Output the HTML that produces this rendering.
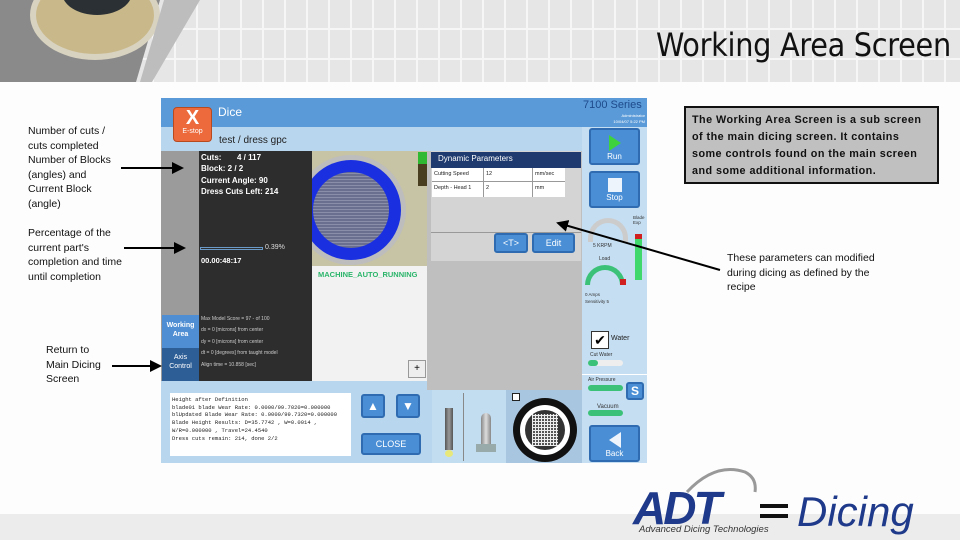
<!DOCTYPE html>
<html><head><meta charset="utf-8"><style>
*{margin:0;padding:0;box-sizing:border-box}
body{width:960px;height:540px;position:relative;overflow:hidden;background:#fdfdfd;font-family:"Liberation Sans",sans-serif}
.a{position:absolute}
.t{font-size:10.5px;line-height:14.5px;color:#111}
.btn{position:absolute;background:#4a8fd6;border:2px solid #2e6bb0;border-radius:3px;color:#fff;font-size:8px;text-align:center}
.mono{font-family:"Liberation Mono",monospace;font-size:5.5px;line-height:7.7px;color:#222}
</style></head><body>
<!-- header -->
<div class="a" style="left:0;top:0;width:960px;height:82px;background:repeating-linear-gradient(90deg,#e6e6e6 0 20px,#f6f6f6 20px 22px),#e8e8e8"></div>
<div class="a" style="left:0;top:0;width:960px;height:82px;background:repeating-linear-gradient(180deg,transparent 0 28px,#f6f6f6 28px 30px)"></div>
<div class="a" style="left:0;top:0;width:160px;height:82px;background:#8a8a8a;clip-path:polygon(0 0,100% 0,85% 100%,0 100%)"></div>
<div class="a" style="left:30px;top:-30px;width:130px;height:90px;border-radius:50%;background:#c9b98a;border:6px solid #d8d2c0"></div>
<div class="a" style="left:62px;top:-30px;width:70px;height:45px;border-radius:50%;background:#2a3034"></div>
<div class="a" style="left:140px;top:0;width:60px;height:82px;background:#bdbdbd;clip-path:polygon(40% 0,100% 0,20% 100%,0 100%)"></div>
<div class="a" style="left:656px;top:26px;font-size:32px;color:#111;font-family:'DejaVu Sans Condensed','Liberation Sans Narrow',sans-serif;letter-spacing:-0.3px">Working Area Screen</div>
<!-- bottom band -->
<div class="a" style="left:0;top:514px;width:960px;height:26px;background:#ececec"></div>
<!-- screen -->
<div class="a" style="left:161px;top:98px;width:486px;height:365px;background:#b8d6ee"></div>
<div class="a" style="left:161px;top:98px;width:486px;height:29px;background:#5a9ad8"></div>
<div class="a" style="left:218px;top:105px;font-size:12px;color:#fff">Dice</div>
<div class="a" style="left:583px;top:99px;font-size:11px;color:#1e4a8a">7100 Series</div>
<div class="a" style="left:600px;top:113px;font-size:4px;color:#fff;text-align:right;width:45px;line-height:6px">Administrator<br>10/04/07 5:22 PM</div>
<div class="a" style="left:173px;top:107px;width:39px;height:35px;background:#ec6a3c;border-radius:4px;border:1px solid #b84a20;color:#fff;text-align:center"><div style="font-size:20px;font-weight:bold;line-height:20px">X</div><div style="font-size:7px">E-stop</div></div>
<div class="a" style="left:219px;top:135px;font-size:10px;color:#222">test / dress gpc</div>
<div class="a" style="left:161px;top:151px;width:38px;height:230px;background:#9b9b9b"></div>
<div class="a" style="left:199px;top:151px;width:113px;height:230px;background:#2d2d2d"></div>
<div class="a" style="left:201px;top:152px;font-size:8px;line-height:11.3px;color:#fff;font-weight:bold">Cuts: &nbsp;&nbsp;&nbsp;&nbsp;&nbsp;&nbsp;4 / 117<br>Block: 2 / 2<br>Current Angle: 90<br>Dress Cuts Left: 214</div>
<div class="a" style="left:200px;top:247px;width:63px;height:3px;border:1px solid #6a9ac8"></div>
<div class="a" style="left:265px;top:244px;font-size:7px;color:#ddd">0.39%</div>
<div class="a" style="left:201px;top:256px;font-size:7.5px;color:#fff;font-weight:bold">00.00:48:17</div>
<div class="a" style="left:201px;top:314px;font-size:5px;line-height:11.4px;color:#ccc">Max Model Score = 97 - of 100<br>dx = 0 [microns] from center<br>dy = 0 [microns] from center<br>dt = 0 [degrees] from taught model<br>Align time = 10.858 [sec]</div>
<div class="a" style="left:162px;top:315px;width:37px;height:33px;background:#4f8ed2;color:#fff;font-size:7px;text-align:center;padding-top:7px;font-weight:bold;line-height:8.5px">Working<br>Area</div>
<div class="a" style="left:162px;top:348px;width:37px;height:33px;background:#2e5e96;color:#fff;font-size:7px;text-align:center;padding-top:6px;line-height:8.5px">Axis<br>Control</div>
<div class="a" style="left:312px;top:151px;width:115px;height:115px;background:#c7c3a5;overflow:hidden"><div class="a" style="left:-16px;top:4px;width:110px;height:110px;border-radius:50%;background:#bdbdbd"></div>
<div class="a" style="left:-11px;top:9px;width:100px;height:100px;border-radius:50%;background:#1a30e0"></div>
<div class="a" style="left:1px;top:21px;width:76px;height:76px;border-radius:50%;background:repeating-linear-gradient(0deg,#6a6f90 0 2px,#8a8ea8 2px 3px)"></div></div>
<div class="a" style="left:418px;top:152px;width:9px;height:34px;background:#4a3e20;border-top:12px solid #2fb832"></div>
<div class="a" style="left:312px;top:266px;width:115px;height:115px;background:#f2f2f2"></div>
<div class="a" style="left:318px;top:270px;font-size:7.5px;color:#2ab56a;font-weight:bold;white-space:nowrap;overflow:hidden;width:108px">MACHINE_AUTO_RUNNING</div>
<div class="a" style="left:408px;top:360px;width:18px;height:18px;border:1px solid #999;background:#eee;font-size:10px;text-align:center;line-height:16px">+</div>
<div class="a" style="left:427px;top:151px;width:155px;height:239px;background:#bfbfbf"></div>
<div class="a" style="left:431px;top:151px;width:150px;height:110px;background:#d4d4d4"></div>
<div class="a" style="left:431px;top:152px;width:150px;height:16px;background:#1f3a6e;color:#fff;font-size:8px;padding:2px 0 0 7px">Dynamic Parameters</div>
<div class="a" style="left:432px;top:168px;width:133px;height:29px;background:#fff;font-size:5.5px;color:#222">
<div style="height:14px;border-bottom:1px solid #999;position:relative"><span class="a" style="left:2px;top:3px">Cutting Speed</span><span class="a" style="left:54px;top:3px">12</span><span class="a" style="left:103px;top:3px">mm/sec</span></div>
<div style="position:relative"><span class="a" style="left:2px;top:3px">Depth - Head 1</span><span class="a" style="left:54px;top:3px">2</span><span class="a" style="left:103px;top:3px">mm</span></div>
<div class="a" style="left:51px;top:0;width:1px;height:29px;background:#999"></div><div class="a" style="left:100px;top:0;width:1px;height:29px;background:#999"></div></div>
<div class="a" style="left:431px;top:232px;width:150px;height:1px;background:#999"></div>
<div class="btn" style="left:494px;top:233px;width:34px;height:20px;font-size:9px;line-height:16px">&lt;T&gt;</div>
<div class="btn" style="left:532px;top:233px;width:43px;height:20px;font-size:9px;line-height:16px">Edit</div>
<!-- right column -->
<div class="a" style="left:582px;top:127px;width:65px;height:336px;background:#c5def2"></div>
<div class="btn" style="left:589px;top:128px;width:51px;height:37px"><div style="width:0;height:0;border-left:12px solid #3ed33e;border-top:8px solid transparent;border-bottom:8px solid transparent;margin:5px auto 1px"></div>Run</div>
<div class="btn" style="left:589px;top:171px;width:51px;height:37px"><div style="width:14px;height:14px;background:#eef4fb;margin:5px auto 1px"></div>Stop</div>
<div class="a" style="left:588px;top:218px;width:40px;height:24px;border:5px solid #ccc;border-bottom:none;border-radius:24px 24px 0 0"></div>
<div class="a" style="left:593px;top:243px;font-size:5px;color:#333">5 KRPM</div>
<div class="a" style="left:599px;top:256px;font-size:5px;color:#333">Load</div>
<div class="a" style="left:585px;top:265px;width:40px;height:20px;border:5px solid #3cc278;border-bottom:none;border-radius:20px 20px 0 0"></div>
<div class="a" style="left:620px;top:279px;width:6px;height:6px;background:#d02020"></div>
<div class="a" style="left:585px;top:291px;font-size:4.5px;color:#333;line-height:7px">0 Amps<br>Sensitivity 5</div>
<div class="a" style="left:633px;top:215px;font-size:4.5px;color:#333">Blade<br>Exp</div>
<div class="a" style="left:635px;top:234px;width:7px;height:46px;background:#3fd86c;border-top:5px solid #d02020"></div>
<div class="a" style="left:591px;top:331px;width:18px;height:18px;background:#fff;border:1px solid #333;font-size:14px;line-height:16px;text-align:center">✔</div>
<div class="a" style="left:611px;top:335px;font-size:7px;color:#222">Water</div>
<div class="a" style="left:590px;top:352px;font-size:5px;color:#333">Cut Water</div>
<div class="a" style="left:588px;top:360px;width:35px;height:6px;background:#eee;border-radius:3px"><div style="width:10px;height:6px;background:#3cc278;border-radius:3px"></div></div>
<div class="a" style="left:582px;top:374px;width:65px;height:1px;background:#fff"></div>
<div class="a" style="left:588px;top:377px;font-size:5px;color:#333">Air Pressure</div>
<div class="a" style="left:588px;top:385px;width:35px;height:6px;background:#3cc278;border-radius:3px"></div>
<div class="btn" style="left:626px;top:382px;width:18px;height:18px;font-size:12px;font-weight:bold;line-height:14px">S</div>
<div class="a" style="left:597px;top:404px;font-size:6px;color:#333">Vacuum</div>
<div class="a" style="left:588px;top:410px;width:35px;height:6px;background:#3cc278;border-radius:3px"></div>
<div class="btn" style="left:589px;top:425px;width:51px;height:37px"><div style="width:0;height:0;border-right:12px solid #eef4fb;border-top:8px solid transparent;border-bottom:8px solid transparent;margin:5px auto 1px"></div>Back</div>
<!-- bottom -->
<div class="a" style="left:170px;top:393px;width:181px;height:63px;background:#fff;padding:3px 2px" ><div class="mono">Height after Definition<br>blade01 blade Wear Rate: 0.0000/99.7020=0.000000<br>blUpdated Blade Wear Rate: 0.0000/99.7320=0.000000<br>Blade Height Results: D=35.7742 , W=0.0014 ,<br>W/R=0.000000 , Travel=24.4540<br>Dress cuts remain: 214, done 2/2</div></div>
<div class="btn" style="left:361px;top:394px;width:24px;height:24px;font-size:12px;line-height:20px">▲</div>
<div class="btn" style="left:396px;top:394px;width:24px;height:24px;font-size:12px;line-height:20px">▼</div>
<div class="btn" style="left:361px;top:433px;width:60px;height:22px;font-size:9px;line-height:18px">CLOSE</div>
<div class="a" style="left:432px;top:390px;width:74px;height:73px;background:#c2dcf0"></div>
<div class="a" style="left:463px;top:393px;width:1px;height:68px;background:#888"></div>
<div class="a" style="left:445px;top:408px;width:8px;height:42px;background:linear-gradient(90deg,#555,#999,#555)"></div>
<div class="a" style="left:445px;top:450px;width:8px;height:7px;background:#e8e87a;border-radius:50%"></div>
<div class="a" style="left:481px;top:413px;width:10px;height:33px;background:linear-gradient(90deg,#888,#ddd,#888);border-radius:5px 5px 0 0"></div>
<div class="a" style="left:476px;top:444px;width:20px;height:8px;background:#9aa"></div>
<div class="a" style="left:506px;top:390px;width:76px;height:73px;background:#a9c6e0"></div>
<div class="a" style="left:512px;top:393px;width:8px;height:8px;border:1px solid #222;background:#fff"></div>
<div class="a" style="left:513px;top:398px;width:64px;height:64px;border-radius:50%;background:#111"></div>
<div class="a" style="left:520px;top:405px;width:50px;height:50px;border-radius:50%;background:#fff"></div>
<div class="a" style="left:525px;top:410px;width:40px;height:40px;border-radius:50%;background:#333"></div>
<div class="a" style="left:532px;top:414px;width:26px;height:32px;background:repeating-linear-gradient(90deg,#eee 0 1px,transparent 1px 3px),repeating-linear-gradient(0deg,#eee 0 1px,#555 1px 3px)"></div>
<!-- annotations -->
<div class="a t" style="left:28px;top:124px">Number of cuts /<br>cuts completed<br>Number of Blocks<br>(angles) and<br>Current Block<br>(angle)</div>
<div class="a t" style="left:28px;top:226px">Percentage of the<br>current part's<br>completion and time<br>until completion</div>
<div class="a t" style="left:46px;top:343px">Return to<br>Main Dicing<br>Screen</div>
<div class="a t" style="left:727px;top:251px;font-size:10.5px">These parameters can modified<br>during dicing as defined by the<br>recipe</div>
<div class="a" style="left:684px;top:106px;width:255px;height:78px;background:#c0c0c0;border:2px solid #111;padding:4px 6px;font-size:10.8px;font-weight:bold;line-height:17px;color:#111;white-space:nowrap;letter-spacing:0.45px">The Working Area Screen is a sub screen<br>of the main dicing screen. It contains<br>some controls found on the main screen<br>and some additional information.</div>
<svg class="a" style="left:0;top:0" width="960" height="540">
<defs><marker id="m" markerWidth="6" markerHeight="6" refX="5" refY="3" orient="auto"><path d="M0,0L6,3L0,6z" fill="#000"/></marker></defs>
<g stroke="#000" stroke-width="2" marker-end="url(#m)">
<line x1="121" y1="168" x2="182" y2="168"/>
<line x1="124" y1="248" x2="184" y2="248"/>
<line x1="112" y1="366" x2="160" y2="366"/>
<line x1="720" y1="270" x2="558" y2="223"/>
</g></svg>
<!-- logo -->
<svg class="a" style="left:625px;top:462px" width="320" height="75">
<path d="M62,30 Q90,0 120,10 Q132,16 130,30" fill="none" stroke="#999" stroke-width="3"/>
<text x="8" y="62" font-family="Liberation Sans" font-style="italic" font-size="46" fill="#1f3a8a" font-weight="bold" letter-spacing="-3">ADT</text>
<rect x="135" y="42" width="28" height="4" fill="#111"/><rect x="135" y="52" width="28" height="4" fill="#111"/>
<text x="172" y="64" font-family="Liberation Sans" font-style="italic" font-size="42" fill="#1f3a8a">Dicing</text>
<text x="14" y="70" font-family="Liberation Sans" font-style="italic" font-size="9.5" fill="#333">Advanced Dicing Technologies</text>
</svg>
</body></html>
